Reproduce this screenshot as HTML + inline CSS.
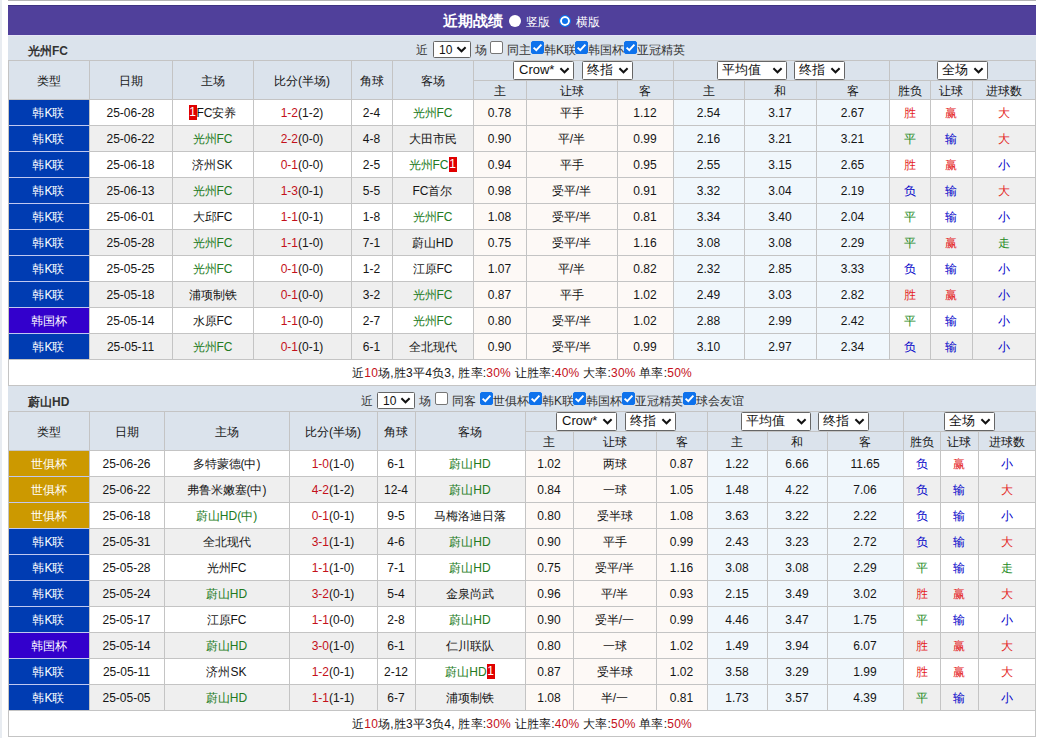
<!DOCTYPE html><html><head><meta charset="utf-8"><style>
html,body{margin:0;padding:0;background:#fff;width:1041px;height:738px;overflow:hidden;position:relative;font-family:"Liberation Sans", sans-serif;font-size:12px;color:#151515}
.t{position:absolute;text-align:center;white-space:nowrap;}
.bd{display:inline-block;vertical-align:top;margin-top:5px;width:8px;height:15px;line-height:15px;text-align:center;background:#e00000;color:#fff;font-size:12px}
.lb{position:absolute;font-size:12px;line-height:16px;color:#333;white-space:nowrap}
.sel{position:absolute;height:18px;box-sizing:border-box;border:1px solid #666;border-radius:1.5px;background:#fff;font-size:14px;line-height:16px;color:#111;}
.sl{position:absolute;left:5px;top:-1px}
.chev{position:absolute;right:3px;top:calc(50% - 4px)}
.cb{position:absolute;width:13px;height:13px;box-sizing:border-box;border:1px solid #767676;border-radius:2px;background:#fff}
.cb.on{background:#0e72ec;border-color:#0e72ec}
.cb svg{position:absolute;left:-1px;top:-1px}
.rd{position:absolute;width:12px;height:12px;border-radius:50%;background:#fff;box-sizing:border-box}
.rd.on{background:#0e72ec;border:1px solid #0e72ec;box-shadow:inset 0 0 0 2px #fff}
</style></head><body><div style="position:absolute;left:0;top:0;width:2px;height:738px;background:#e8ecf1"></div>
<div style="position:absolute;left:8px;top:0px;width:1028px;height:1px;background:#b4b4b4;"></div>
<div style="position:absolute;left:8px;top:5px;width:1028px;height:30px;background:#50409b;border-top:1px solid #3e3380;box-sizing:border-box"></div>
<div style="position:absolute;left:8px;top:35px;width:1028px;height:1px;background:#e6e4f6;"></div>
<div class="t" style="left:443px;top:12px;line-height:17px;color:#fff;font-size:15px;font-weight:bold">近期战绩</div>
<div class="rd" style="left:509px;top:15px"></div>
<div class="t" style="left:526px;top:14px;line-height:17px;color:#fff;font-size:12px">竖版</div>
<div class="rd on" style="left:559px;top:15px"></div>
<div class="t" style="left:576px;top:14px;line-height:17px;color:#fff;font-size:12px">横版</div>
<div style="position:absolute;left:8px;top:36px;width:1028px;height:24px;background:#dbe3ec;"></div>
<div class="t" style="left:28px;top:36px;height:24px;line-height:31px;font-weight:bold;color:#333;text-align:left">光州FC</div>
<div class="lb" style="left:416px;top:42px">近</div><div class="sel" style="left:433px;top:41px;width:38px;height:17px;font-size:12px;line-height:15px"><span class="sl" style="left:5px;top:1px">10</span><svg class="chev" width="11" height="7" viewBox="0 0 11 7"><path d="M1.4 1.3 L5.5 5.3 L9.6 1.3" fill="none" stroke="#111" stroke-width="2"/></svg></div><div class="lb" style="left:475px;top:42px">场</div><div class="cb" style="left:490px;top:41px"></div><div class="lb" style="left:507px;top:42px">同主</div><div class="cb on" style="left:531px;top:41px"><svg width="13" height="13" viewBox="0 0 13 13"><path d="M2.6 6.6 L5.3 9.2 L10.4 3.6" fill="none" stroke="#fff" stroke-width="1.9"/></svg></div><div class="lb" style="left:544px;top:42px">韩K联</div><div class="cb on" style="left:575px;top:41px"><svg width="13" height="13" viewBox="0 0 13 13"><path d="M2.6 6.6 L5.3 9.2 L10.4 3.6" fill="none" stroke="#fff" stroke-width="1.9"/></svg></div><div class="lb" style="left:588px;top:42px">韩国杯</div><div class="cb on" style="left:624px;top:41px"><svg width="13" height="13" viewBox="0 0 13 13"><path d="M2.6 6.6 L5.3 9.2 L10.4 3.6" fill="none" stroke="#fff" stroke-width="1.9"/></svg></div><div class="lb" style="left:637px;top:42px">亚冠精英</div>
<div style="position:absolute;left:8px;top:60px;width:1028px;height:40px;background:#dbe3ec;"></div>
<div style="position:absolute;left:8px;top:99px;width:1028px;height:26px;background:#ffffff;"></div>
<div style="position:absolute;left:473px;top:99px;width:200px;height:26px;background:#fdf9f6;"></div>
<div style="position:absolute;left:673px;top:99px;width:216px;height:26px;background:#f0f7fc;"></div>
<div style="position:absolute;left:8px;top:99px;width:81px;height:26px;background:#003cb2;"></div>
<div class="t" style="left:8px;top:100px;width:81px;height:26px;line-height:26px;color:#ffffff;">韩K联</div>
<div class="t" style="left:89px;top:100px;width:83px;height:26px;line-height:26px;color:#151515;">25-06-28</div>
<div class="t" style="left:172px;top:100px;width:81px;height:26px;line-height:26px;color:#151515;"><span class="bd">1</span><span style="color:#151515">FC安养</span></div>
<div class="t" style="left:253px;top:100px;width:98px;height:26px;line-height:26px;color:#151515;"><span style="color:#c4101a">1-2</span>(1-2)</div>
<div class="t" style="left:351px;top:100px;width:41px;height:26px;line-height:26px;color:#151515;">2-4</div>
<div class="t" style="left:392px;top:100px;width:81px;height:26px;line-height:26px;color:#151515;"><span style="color:#217a21">光州FC</span></div>
<div class="t" style="left:473px;top:100px;width:53px;height:26px;line-height:26px;color:#151515;">0.78</div>
<div class="t" style="left:526px;top:100px;width:91px;height:26px;line-height:26px;color:#151515;">平手</div>
<div class="t" style="left:617px;top:100px;width:56px;height:26px;line-height:26px;color:#151515;">1.12</div>
<div class="t" style="left:673px;top:100px;width:71px;height:26px;line-height:26px;color:#151515;">2.54</div>
<div class="t" style="left:744px;top:100px;width:72px;height:26px;line-height:26px;color:#151515;">3.17</div>
<div class="t" style="left:816px;top:100px;width:73px;height:26px;line-height:26px;color:#151515;">2.67</div>
<div class="t" style="left:889px;top:100px;width:41px;height:26px;line-height:26px;color:#e41c1c;">胜</div>
<div class="t" style="left:930px;top:100px;width:42px;height:26px;line-height:26px;color:#e41c1c;">赢</div>
<div class="t" style="left:972px;top:100px;width:63px;height:26px;line-height:26px;color:#e41c1c;">大</div>
<div style="position:absolute;left:8px;top:125px;width:1028px;height:26px;background:#efefef;"></div>
<div style="position:absolute;left:473px;top:125px;width:200px;height:26px;background:#fdf9f6;"></div>
<div style="position:absolute;left:673px;top:125px;width:216px;height:26px;background:#f0f7fc;"></div>
<div style="position:absolute;left:8px;top:125px;width:81px;height:26px;background:#003cb2;"></div>
<div class="t" style="left:8px;top:126px;width:81px;height:26px;line-height:26px;color:#ffffff;">韩K联</div>
<div class="t" style="left:89px;top:126px;width:83px;height:26px;line-height:26px;color:#151515;">25-06-22</div>
<div class="t" style="left:172px;top:126px;width:81px;height:26px;line-height:26px;color:#151515;"><span style="color:#217a21">光州FC</span></div>
<div class="t" style="left:253px;top:126px;width:98px;height:26px;line-height:26px;color:#151515;"><span style="color:#c4101a">2-2</span>(0-0)</div>
<div class="t" style="left:351px;top:126px;width:41px;height:26px;line-height:26px;color:#151515;">4-8</div>
<div class="t" style="left:392px;top:126px;width:81px;height:26px;line-height:26px;color:#151515;"><span style="color:#151515">大田市民</span></div>
<div class="t" style="left:473px;top:126px;width:53px;height:26px;line-height:26px;color:#151515;">0.90</div>
<div class="t" style="left:526px;top:126px;width:91px;height:26px;line-height:26px;color:#151515;">平/半</div>
<div class="t" style="left:617px;top:126px;width:56px;height:26px;line-height:26px;color:#151515;">0.99</div>
<div class="t" style="left:673px;top:126px;width:71px;height:26px;line-height:26px;color:#151515;">2.16</div>
<div class="t" style="left:744px;top:126px;width:72px;height:26px;line-height:26px;color:#151515;">3.21</div>
<div class="t" style="left:816px;top:126px;width:73px;height:26px;line-height:26px;color:#151515;">3.21</div>
<div class="t" style="left:889px;top:126px;width:41px;height:26px;line-height:26px;color:#1c8a1c;">平</div>
<div class="t" style="left:930px;top:126px;width:42px;height:26px;line-height:26px;color:#0000c8;">输</div>
<div class="t" style="left:972px;top:126px;width:63px;height:26px;line-height:26px;color:#e41c1c;">大</div>
<div style="position:absolute;left:8px;top:151px;width:1028px;height:26px;background:#ffffff;"></div>
<div style="position:absolute;left:473px;top:151px;width:200px;height:26px;background:#fdf9f6;"></div>
<div style="position:absolute;left:673px;top:151px;width:216px;height:26px;background:#f0f7fc;"></div>
<div style="position:absolute;left:8px;top:151px;width:81px;height:26px;background:#003cb2;"></div>
<div class="t" style="left:8px;top:152px;width:81px;height:26px;line-height:26px;color:#ffffff;">韩K联</div>
<div class="t" style="left:89px;top:152px;width:83px;height:26px;line-height:26px;color:#151515;">25-06-18</div>
<div class="t" style="left:172px;top:152px;width:81px;height:26px;line-height:26px;color:#151515;"><span style="color:#151515">济州SK</span></div>
<div class="t" style="left:253px;top:152px;width:98px;height:26px;line-height:26px;color:#151515;"><span style="color:#c4101a">0-1</span>(0-0)</div>
<div class="t" style="left:351px;top:152px;width:41px;height:26px;line-height:26px;color:#151515;">2-5</div>
<div class="t" style="left:392px;top:152px;width:81px;height:26px;line-height:26px;color:#151515;"><span style="color:#217a21">光州FC</span><span class="bd">1</span></div>
<div class="t" style="left:473px;top:152px;width:53px;height:26px;line-height:26px;color:#151515;">0.94</div>
<div class="t" style="left:526px;top:152px;width:91px;height:26px;line-height:26px;color:#151515;">平手</div>
<div class="t" style="left:617px;top:152px;width:56px;height:26px;line-height:26px;color:#151515;">0.95</div>
<div class="t" style="left:673px;top:152px;width:71px;height:26px;line-height:26px;color:#151515;">2.55</div>
<div class="t" style="left:744px;top:152px;width:72px;height:26px;line-height:26px;color:#151515;">3.15</div>
<div class="t" style="left:816px;top:152px;width:73px;height:26px;line-height:26px;color:#151515;">2.65</div>
<div class="t" style="left:889px;top:152px;width:41px;height:26px;line-height:26px;color:#e41c1c;">胜</div>
<div class="t" style="left:930px;top:152px;width:42px;height:26px;line-height:26px;color:#e41c1c;">赢</div>
<div class="t" style="left:972px;top:152px;width:63px;height:26px;line-height:26px;color:#0000c8;">小</div>
<div style="position:absolute;left:8px;top:177px;width:1028px;height:26px;background:#efefef;"></div>
<div style="position:absolute;left:473px;top:177px;width:200px;height:26px;background:#fdf9f6;"></div>
<div style="position:absolute;left:673px;top:177px;width:216px;height:26px;background:#f0f7fc;"></div>
<div style="position:absolute;left:8px;top:177px;width:81px;height:26px;background:#003cb2;"></div>
<div class="t" style="left:8px;top:178px;width:81px;height:26px;line-height:26px;color:#ffffff;">韩K联</div>
<div class="t" style="left:89px;top:178px;width:83px;height:26px;line-height:26px;color:#151515;">25-06-13</div>
<div class="t" style="left:172px;top:178px;width:81px;height:26px;line-height:26px;color:#151515;"><span style="color:#217a21">光州FC</span></div>
<div class="t" style="left:253px;top:178px;width:98px;height:26px;line-height:26px;color:#151515;"><span style="color:#c4101a">1-3</span>(0-1)</div>
<div class="t" style="left:351px;top:178px;width:41px;height:26px;line-height:26px;color:#151515;">5-5</div>
<div class="t" style="left:392px;top:178px;width:81px;height:26px;line-height:26px;color:#151515;"><span style="color:#151515">FC首尔</span></div>
<div class="t" style="left:473px;top:178px;width:53px;height:26px;line-height:26px;color:#151515;">0.98</div>
<div class="t" style="left:526px;top:178px;width:91px;height:26px;line-height:26px;color:#151515;">受平/半</div>
<div class="t" style="left:617px;top:178px;width:56px;height:26px;line-height:26px;color:#151515;">0.91</div>
<div class="t" style="left:673px;top:178px;width:71px;height:26px;line-height:26px;color:#151515;">3.32</div>
<div class="t" style="left:744px;top:178px;width:72px;height:26px;line-height:26px;color:#151515;">3.04</div>
<div class="t" style="left:816px;top:178px;width:73px;height:26px;line-height:26px;color:#151515;">2.19</div>
<div class="t" style="left:889px;top:178px;width:41px;height:26px;line-height:26px;color:#0000c8;">负</div>
<div class="t" style="left:930px;top:178px;width:42px;height:26px;line-height:26px;color:#0000c8;">输</div>
<div class="t" style="left:972px;top:178px;width:63px;height:26px;line-height:26px;color:#e41c1c;">大</div>
<div style="position:absolute;left:8px;top:203px;width:1028px;height:26px;background:#ffffff;"></div>
<div style="position:absolute;left:473px;top:203px;width:200px;height:26px;background:#fdf9f6;"></div>
<div style="position:absolute;left:673px;top:203px;width:216px;height:26px;background:#f0f7fc;"></div>
<div style="position:absolute;left:8px;top:203px;width:81px;height:26px;background:#003cb2;"></div>
<div class="t" style="left:8px;top:204px;width:81px;height:26px;line-height:26px;color:#ffffff;">韩K联</div>
<div class="t" style="left:89px;top:204px;width:83px;height:26px;line-height:26px;color:#151515;">25-06-01</div>
<div class="t" style="left:172px;top:204px;width:81px;height:26px;line-height:26px;color:#151515;"><span style="color:#151515">大邱FC</span></div>
<div class="t" style="left:253px;top:204px;width:98px;height:26px;line-height:26px;color:#151515;"><span style="color:#c4101a">1-1</span>(0-1)</div>
<div class="t" style="left:351px;top:204px;width:41px;height:26px;line-height:26px;color:#151515;">1-8</div>
<div class="t" style="left:392px;top:204px;width:81px;height:26px;line-height:26px;color:#151515;"><span style="color:#217a21">光州FC</span></div>
<div class="t" style="left:473px;top:204px;width:53px;height:26px;line-height:26px;color:#151515;">1.08</div>
<div class="t" style="left:526px;top:204px;width:91px;height:26px;line-height:26px;color:#151515;">受平/半</div>
<div class="t" style="left:617px;top:204px;width:56px;height:26px;line-height:26px;color:#151515;">0.81</div>
<div class="t" style="left:673px;top:204px;width:71px;height:26px;line-height:26px;color:#151515;">3.34</div>
<div class="t" style="left:744px;top:204px;width:72px;height:26px;line-height:26px;color:#151515;">3.40</div>
<div class="t" style="left:816px;top:204px;width:73px;height:26px;line-height:26px;color:#151515;">2.04</div>
<div class="t" style="left:889px;top:204px;width:41px;height:26px;line-height:26px;color:#1c8a1c;">平</div>
<div class="t" style="left:930px;top:204px;width:42px;height:26px;line-height:26px;color:#0000c8;">输</div>
<div class="t" style="left:972px;top:204px;width:63px;height:26px;line-height:26px;color:#0000c8;">小</div>
<div style="position:absolute;left:8px;top:229px;width:1028px;height:26px;background:#efefef;"></div>
<div style="position:absolute;left:473px;top:229px;width:200px;height:26px;background:#fdf9f6;"></div>
<div style="position:absolute;left:673px;top:229px;width:216px;height:26px;background:#f0f7fc;"></div>
<div style="position:absolute;left:8px;top:229px;width:81px;height:26px;background:#003cb2;"></div>
<div class="t" style="left:8px;top:230px;width:81px;height:26px;line-height:26px;color:#ffffff;">韩K联</div>
<div class="t" style="left:89px;top:230px;width:83px;height:26px;line-height:26px;color:#151515;">25-05-28</div>
<div class="t" style="left:172px;top:230px;width:81px;height:26px;line-height:26px;color:#151515;"><span style="color:#217a21">光州FC</span></div>
<div class="t" style="left:253px;top:230px;width:98px;height:26px;line-height:26px;color:#151515;"><span style="color:#c4101a">1-1</span>(1-0)</div>
<div class="t" style="left:351px;top:230px;width:41px;height:26px;line-height:26px;color:#151515;">7-1</div>
<div class="t" style="left:392px;top:230px;width:81px;height:26px;line-height:26px;color:#151515;"><span style="color:#151515">蔚山HD</span></div>
<div class="t" style="left:473px;top:230px;width:53px;height:26px;line-height:26px;color:#151515;">0.75</div>
<div class="t" style="left:526px;top:230px;width:91px;height:26px;line-height:26px;color:#151515;">受平/半</div>
<div class="t" style="left:617px;top:230px;width:56px;height:26px;line-height:26px;color:#151515;">1.16</div>
<div class="t" style="left:673px;top:230px;width:71px;height:26px;line-height:26px;color:#151515;">3.08</div>
<div class="t" style="left:744px;top:230px;width:72px;height:26px;line-height:26px;color:#151515;">3.08</div>
<div class="t" style="left:816px;top:230px;width:73px;height:26px;line-height:26px;color:#151515;">2.29</div>
<div class="t" style="left:889px;top:230px;width:41px;height:26px;line-height:26px;color:#1c8a1c;">平</div>
<div class="t" style="left:930px;top:230px;width:42px;height:26px;line-height:26px;color:#e41c1c;">赢</div>
<div class="t" style="left:972px;top:230px;width:63px;height:26px;line-height:26px;color:#1c8a1c;">走</div>
<div style="position:absolute;left:8px;top:255px;width:1028px;height:26px;background:#ffffff;"></div>
<div style="position:absolute;left:473px;top:255px;width:200px;height:26px;background:#fdf9f6;"></div>
<div style="position:absolute;left:673px;top:255px;width:216px;height:26px;background:#f0f7fc;"></div>
<div style="position:absolute;left:8px;top:255px;width:81px;height:26px;background:#003cb2;"></div>
<div class="t" style="left:8px;top:256px;width:81px;height:26px;line-height:26px;color:#ffffff;">韩K联</div>
<div class="t" style="left:89px;top:256px;width:83px;height:26px;line-height:26px;color:#151515;">25-05-25</div>
<div class="t" style="left:172px;top:256px;width:81px;height:26px;line-height:26px;color:#151515;"><span style="color:#217a21">光州FC</span></div>
<div class="t" style="left:253px;top:256px;width:98px;height:26px;line-height:26px;color:#151515;"><span style="color:#c4101a">0-1</span>(0-0)</div>
<div class="t" style="left:351px;top:256px;width:41px;height:26px;line-height:26px;color:#151515;">1-2</div>
<div class="t" style="left:392px;top:256px;width:81px;height:26px;line-height:26px;color:#151515;"><span style="color:#151515">江原FC</span></div>
<div class="t" style="left:473px;top:256px;width:53px;height:26px;line-height:26px;color:#151515;">1.07</div>
<div class="t" style="left:526px;top:256px;width:91px;height:26px;line-height:26px;color:#151515;">平/半</div>
<div class="t" style="left:617px;top:256px;width:56px;height:26px;line-height:26px;color:#151515;">0.82</div>
<div class="t" style="left:673px;top:256px;width:71px;height:26px;line-height:26px;color:#151515;">2.32</div>
<div class="t" style="left:744px;top:256px;width:72px;height:26px;line-height:26px;color:#151515;">2.85</div>
<div class="t" style="left:816px;top:256px;width:73px;height:26px;line-height:26px;color:#151515;">3.33</div>
<div class="t" style="left:889px;top:256px;width:41px;height:26px;line-height:26px;color:#0000c8;">负</div>
<div class="t" style="left:930px;top:256px;width:42px;height:26px;line-height:26px;color:#0000c8;">输</div>
<div class="t" style="left:972px;top:256px;width:63px;height:26px;line-height:26px;color:#0000c8;">小</div>
<div style="position:absolute;left:8px;top:281px;width:1028px;height:26px;background:#efefef;"></div>
<div style="position:absolute;left:473px;top:281px;width:200px;height:26px;background:#fdf9f6;"></div>
<div style="position:absolute;left:673px;top:281px;width:216px;height:26px;background:#f0f7fc;"></div>
<div style="position:absolute;left:8px;top:281px;width:81px;height:26px;background:#003cb2;"></div>
<div class="t" style="left:8px;top:282px;width:81px;height:26px;line-height:26px;color:#ffffff;">韩K联</div>
<div class="t" style="left:89px;top:282px;width:83px;height:26px;line-height:26px;color:#151515;">25-05-18</div>
<div class="t" style="left:172px;top:282px;width:81px;height:26px;line-height:26px;color:#151515;"><span style="color:#151515">浦项制铁</span></div>
<div class="t" style="left:253px;top:282px;width:98px;height:26px;line-height:26px;color:#151515;"><span style="color:#c4101a">0-1</span>(0-0)</div>
<div class="t" style="left:351px;top:282px;width:41px;height:26px;line-height:26px;color:#151515;">3-2</div>
<div class="t" style="left:392px;top:282px;width:81px;height:26px;line-height:26px;color:#151515;"><span style="color:#217a21">光州FC</span></div>
<div class="t" style="left:473px;top:282px;width:53px;height:26px;line-height:26px;color:#151515;">0.87</div>
<div class="t" style="left:526px;top:282px;width:91px;height:26px;line-height:26px;color:#151515;">平手</div>
<div class="t" style="left:617px;top:282px;width:56px;height:26px;line-height:26px;color:#151515;">1.02</div>
<div class="t" style="left:673px;top:282px;width:71px;height:26px;line-height:26px;color:#151515;">2.49</div>
<div class="t" style="left:744px;top:282px;width:72px;height:26px;line-height:26px;color:#151515;">3.03</div>
<div class="t" style="left:816px;top:282px;width:73px;height:26px;line-height:26px;color:#151515;">2.82</div>
<div class="t" style="left:889px;top:282px;width:41px;height:26px;line-height:26px;color:#e41c1c;">胜</div>
<div class="t" style="left:930px;top:282px;width:42px;height:26px;line-height:26px;color:#e41c1c;">赢</div>
<div class="t" style="left:972px;top:282px;width:63px;height:26px;line-height:26px;color:#0000c8;">小</div>
<div style="position:absolute;left:8px;top:307px;width:1028px;height:26px;background:#ffffff;"></div>
<div style="position:absolute;left:473px;top:307px;width:200px;height:26px;background:#fdf9f6;"></div>
<div style="position:absolute;left:673px;top:307px;width:216px;height:26px;background:#f0f7fc;"></div>
<div style="position:absolute;left:8px;top:307px;width:81px;height:26px;background:#3300cc;"></div>
<div class="t" style="left:8px;top:308px;width:81px;height:26px;line-height:26px;color:#ffffff;">韩国杯</div>
<div class="t" style="left:89px;top:308px;width:83px;height:26px;line-height:26px;color:#151515;">25-05-14</div>
<div class="t" style="left:172px;top:308px;width:81px;height:26px;line-height:26px;color:#151515;"><span style="color:#151515">水原FC</span></div>
<div class="t" style="left:253px;top:308px;width:98px;height:26px;line-height:26px;color:#151515;"><span style="color:#c4101a">1-1</span>(0-0)</div>
<div class="t" style="left:351px;top:308px;width:41px;height:26px;line-height:26px;color:#151515;">2-7</div>
<div class="t" style="left:392px;top:308px;width:81px;height:26px;line-height:26px;color:#151515;"><span style="color:#217a21">光州FC</span></div>
<div class="t" style="left:473px;top:308px;width:53px;height:26px;line-height:26px;color:#151515;">0.80</div>
<div class="t" style="left:526px;top:308px;width:91px;height:26px;line-height:26px;color:#151515;">受平/半</div>
<div class="t" style="left:617px;top:308px;width:56px;height:26px;line-height:26px;color:#151515;">1.02</div>
<div class="t" style="left:673px;top:308px;width:71px;height:26px;line-height:26px;color:#151515;">2.88</div>
<div class="t" style="left:744px;top:308px;width:72px;height:26px;line-height:26px;color:#151515;">2.99</div>
<div class="t" style="left:816px;top:308px;width:73px;height:26px;line-height:26px;color:#151515;">2.42</div>
<div class="t" style="left:889px;top:308px;width:41px;height:26px;line-height:26px;color:#1c8a1c;">平</div>
<div class="t" style="left:930px;top:308px;width:42px;height:26px;line-height:26px;color:#0000c8;">输</div>
<div class="t" style="left:972px;top:308px;width:63px;height:26px;line-height:26px;color:#0000c8;">小</div>
<div style="position:absolute;left:8px;top:333px;width:1028px;height:26px;background:#efefef;"></div>
<div style="position:absolute;left:473px;top:333px;width:200px;height:26px;background:#fdf9f6;"></div>
<div style="position:absolute;left:673px;top:333px;width:216px;height:26px;background:#f0f7fc;"></div>
<div style="position:absolute;left:8px;top:333px;width:81px;height:26px;background:#003cb2;"></div>
<div class="t" style="left:8px;top:334px;width:81px;height:26px;line-height:26px;color:#ffffff;">韩K联</div>
<div class="t" style="left:89px;top:334px;width:83px;height:26px;line-height:26px;color:#151515;">25-05-11</div>
<div class="t" style="left:172px;top:334px;width:81px;height:26px;line-height:26px;color:#151515;"><span style="color:#217a21">光州FC</span></div>
<div class="t" style="left:253px;top:334px;width:98px;height:26px;line-height:26px;color:#151515;"><span style="color:#c4101a">0-1</span>(0-1)</div>
<div class="t" style="left:351px;top:334px;width:41px;height:26px;line-height:26px;color:#151515;">6-1</div>
<div class="t" style="left:392px;top:334px;width:81px;height:26px;line-height:26px;color:#151515;"><span style="color:#151515">全北现代</span></div>
<div class="t" style="left:473px;top:334px;width:53px;height:26px;line-height:26px;color:#151515;">0.90</div>
<div class="t" style="left:526px;top:334px;width:91px;height:26px;line-height:26px;color:#151515;">受平/半</div>
<div class="t" style="left:617px;top:334px;width:56px;height:26px;line-height:26px;color:#151515;">0.99</div>
<div class="t" style="left:673px;top:334px;width:71px;height:26px;line-height:26px;color:#151515;">3.10</div>
<div class="t" style="left:744px;top:334px;width:72px;height:26px;line-height:26px;color:#151515;">2.97</div>
<div class="t" style="left:816px;top:334px;width:73px;height:26px;line-height:26px;color:#151515;">2.34</div>
<div class="t" style="left:889px;top:334px;width:41px;height:26px;line-height:26px;color:#0000c8;">负</div>
<div class="t" style="left:930px;top:334px;width:42px;height:26px;line-height:26px;color:#0000c8;">输</div>
<div class="t" style="left:972px;top:334px;width:63px;height:26px;line-height:26px;color:#0000c8;">小</div>
<div style="position:absolute;left:8px;top:359px;width:1028px;height:26px;background:#ffffff;"></div>
<div class="t" style="left:8px;top:360px;width:1028px;height:26px;line-height:26px;color:#151515;letter-spacing:0.22px">近<span style="color:#c4101a">10</span>场,胜3平4负3, 胜率:<span style="color:#c4101a">30%</span> 让胜率:<span style="color:#c4101a">40%</span> 大率:<span style="color:#c4101a">30%</span> 单率:<span style="color:#c4101a">50%</span></div>
<div style="position:absolute;left:8px;top:60px;width:1028px;height:1px;background:#c4c4c4;"></div>
<div style="position:absolute;left:473px;top:80px;width:563px;height:1px;background:#c4c4c4;"></div>
<div style="position:absolute;left:8px;top:99px;width:1028px;height:1px;background:#c4c4c4;"></div>
<div style="position:absolute;left:8px;top:125px;width:1028px;height:1px;background:#c4c4c4;"></div>
<div style="position:absolute;left:9px;top:125px;width:80px;height:1px;background:#c0c8f0;"></div>
<div style="position:absolute;left:8px;top:151px;width:1028px;height:1px;background:#c4c4c4;"></div>
<div style="position:absolute;left:9px;top:151px;width:80px;height:1px;background:#c0c8f0;"></div>
<div style="position:absolute;left:8px;top:177px;width:1028px;height:1px;background:#c4c4c4;"></div>
<div style="position:absolute;left:9px;top:177px;width:80px;height:1px;background:#c0c8f0;"></div>
<div style="position:absolute;left:8px;top:203px;width:1028px;height:1px;background:#c4c4c4;"></div>
<div style="position:absolute;left:9px;top:203px;width:80px;height:1px;background:#c0c8f0;"></div>
<div style="position:absolute;left:8px;top:229px;width:1028px;height:1px;background:#c4c4c4;"></div>
<div style="position:absolute;left:9px;top:229px;width:80px;height:1px;background:#c0c8f0;"></div>
<div style="position:absolute;left:8px;top:255px;width:1028px;height:1px;background:#c4c4c4;"></div>
<div style="position:absolute;left:9px;top:255px;width:80px;height:1px;background:#c0c8f0;"></div>
<div style="position:absolute;left:8px;top:281px;width:1028px;height:1px;background:#c4c4c4;"></div>
<div style="position:absolute;left:9px;top:281px;width:80px;height:1px;background:#c0c8f0;"></div>
<div style="position:absolute;left:8px;top:307px;width:1028px;height:1px;background:#c4c4c4;"></div>
<div style="position:absolute;left:9px;top:307px;width:80px;height:1px;background:#c0c8f0;"></div>
<div style="position:absolute;left:8px;top:333px;width:1028px;height:1px;background:#c4c4c4;"></div>
<div style="position:absolute;left:9px;top:333px;width:80px;height:1px;background:#c0c8f0;"></div>
<div style="position:absolute;left:8px;top:359px;width:1028px;height:1px;background:#c4c4c4;"></div>
<div style="position:absolute;left:8px;top:385px;width:1028px;height:1px;background:#c4c4c4;"></div>
<div style="position:absolute;left:8px;top:60px;width:1px;height:326px;background:#c4c4c4;"></div>
<div style="position:absolute;left:89px;top:60px;width:1px;height:299px;background:#c4c4c4;"></div>
<div style="position:absolute;left:172px;top:60px;width:1px;height:299px;background:#c4c4c4;"></div>
<div style="position:absolute;left:253px;top:60px;width:1px;height:299px;background:#c4c4c4;"></div>
<div style="position:absolute;left:351px;top:60px;width:1px;height:299px;background:#c4c4c4;"></div>
<div style="position:absolute;left:392px;top:60px;width:1px;height:299px;background:#c4c4c4;"></div>
<div style="position:absolute;left:473px;top:60px;width:1px;height:299px;background:#c4c4c4;"></div>
<div style="position:absolute;left:526px;top:80px;width:1px;height:279px;background:#c4c4c4;"></div>
<div style="position:absolute;left:617px;top:80px;width:1px;height:279px;background:#c4c4c4;"></div>
<div style="position:absolute;left:673px;top:60px;width:1px;height:299px;background:#c4c4c4;"></div>
<div style="position:absolute;left:744px;top:80px;width:1px;height:279px;background:#c4c4c4;"></div>
<div style="position:absolute;left:816px;top:80px;width:1px;height:279px;background:#c4c4c4;"></div>
<div style="position:absolute;left:889px;top:60px;width:1px;height:299px;background:#c4c4c4;"></div>
<div style="position:absolute;left:930px;top:80px;width:1px;height:279px;background:#c4c4c4;"></div>
<div style="position:absolute;left:972px;top:80px;width:1px;height:279px;background:#c4c4c4;"></div>
<div style="position:absolute;left:1035px;top:60px;width:1px;height:326px;background:#c4c4c4;"></div>
<div class="t" style="left:8px;top:62px;width:81px;height:38px;line-height:38px;color:#151515;">类型</div>
<div class="t" style="left:89px;top:62px;width:83px;height:38px;line-height:38px;color:#151515;">日期</div>
<div class="t" style="left:172px;top:62px;width:81px;height:38px;line-height:38px;color:#151515;">主场</div>
<div class="t" style="left:253px;top:62px;width:98px;height:38px;line-height:38px;color:#151515;">比分(半场)</div>
<div class="t" style="left:351px;top:62px;width:41px;height:38px;line-height:38px;color:#151515;">角球</div>
<div class="t" style="left:392px;top:62px;width:81px;height:38px;line-height:38px;color:#151515;">客场</div>
<div class="t" style="left:473px;top:82px;width:53px;height:18px;line-height:18px;color:#151515;">主</div>
<div class="t" style="left:526px;top:82px;width:91px;height:18px;line-height:18px;color:#151515;">让球</div>
<div class="t" style="left:617px;top:82px;width:56px;height:18px;line-height:18px;color:#151515;">客</div>
<div class="t" style="left:673px;top:82px;width:71px;height:18px;line-height:18px;color:#151515;">主</div>
<div class="t" style="left:744px;top:82px;width:72px;height:18px;line-height:18px;color:#151515;">和</div>
<div class="t" style="left:816px;top:82px;width:73px;height:18px;line-height:18px;color:#151515;">客</div>
<div class="t" style="left:889px;top:82px;width:41px;height:18px;line-height:18px;color:#151515;">胜负</div>
<div class="t" style="left:930px;top:82px;width:42px;height:18px;line-height:18px;color:#151515;">让球</div>
<div class="t" style="left:972px;top:82px;width:63px;height:18px;line-height:18px;color:#151515;">进球数</div>
<div class="sel" style="left:513px;top:61px;width:61px;height:19px;font-size:13px;line-height:17px"><span class="sl" style="left:5px;top:-1px">Crow*</span><svg class="chev" width="11" height="7" viewBox="0 0 11 7"><path d="M1.4 1.3 L5.5 5.3 L9.6 1.3" fill="none" stroke="#111" stroke-width="2"/></svg></div>
<div class="sel" style="left:582px;top:61px;width:51px;height:19px;font-size:13px;line-height:17px"><span class="sl" style="left:4px;top:-1px">终指</span><svg class="chev" width="11" height="7" viewBox="0 0 11 7"><path d="M1.4 1.3 L5.5 5.3 L9.6 1.3" fill="none" stroke="#111" stroke-width="2"/></svg></div>
<div class="sel" style="left:717px;top:61px;width:70px;height:19px;font-size:13px;line-height:17px"><span class="sl" style="left:4px;top:-1px">平均值</span><svg class="chev" width="11" height="7" viewBox="0 0 11 7"><path d="M1.4 1.3 L5.5 5.3 L9.6 1.3" fill="none" stroke="#111" stroke-width="2"/></svg></div>
<div class="sel" style="left:794px;top:61px;width:51px;height:19px;font-size:13px;line-height:17px"><span class="sl" style="left:4px;top:-1px">终指</span><svg class="chev" width="11" height="7" viewBox="0 0 11 7"><path d="M1.4 1.3 L5.5 5.3 L9.6 1.3" fill="none" stroke="#111" stroke-width="2"/></svg></div>
<div class="sel" style="left:937px;top:61px;width:51px;height:19px;font-size:13px;line-height:17px"><span class="sl" style="left:4px;top:-1px">全场</span><svg class="chev" width="11" height="7" viewBox="0 0 11 7"><path d="M1.4 1.3 L5.5 5.3 L9.6 1.3" fill="none" stroke="#111" stroke-width="2"/></svg></div>
<div style="position:absolute;left:8px;top:386px;width:1028px;height:25px;background:#dbe3ec;"></div>
<div class="t" style="left:28px;top:386px;height:25px;line-height:32px;font-weight:bold;color:#333;text-align:left">蔚山HD</div>
<div class="lb" style="left:361px;top:393px">近</div><div class="sel" style="left:377px;top:392px;width:38px;height:17px;font-size:12px;line-height:15px"><span class="sl" style="left:5px;top:1px">10</span><svg class="chev" width="11" height="7" viewBox="0 0 11 7"><path d="M1.4 1.3 L5.5 5.3 L9.6 1.3" fill="none" stroke="#111" stroke-width="2"/></svg></div><div class="lb" style="left:419px;top:393px">场</div><div class="cb" style="left:435px;top:392px"></div><div class="lb" style="left:452px;top:393px">同客</div><div class="cb on" style="left:480px;top:392px"><svg width="13" height="13" viewBox="0 0 13 13"><path d="M2.6 6.6 L5.3 9.2 L10.4 3.6" fill="none" stroke="#fff" stroke-width="1.9"/></svg></div><div class="lb" style="left:493px;top:393px">世俱杯</div><div class="cb on" style="left:529px;top:392px"><svg width="13" height="13" viewBox="0 0 13 13"><path d="M2.6 6.6 L5.3 9.2 L10.4 3.6" fill="none" stroke="#fff" stroke-width="1.9"/></svg></div><div class="lb" style="left:542px;top:393px">韩K联</div><div class="cb on" style="left:573px;top:392px"><svg width="13" height="13" viewBox="0 0 13 13"><path d="M2.6 6.6 L5.3 9.2 L10.4 3.6" fill="none" stroke="#fff" stroke-width="1.9"/></svg></div><div class="lb" style="left:586px;top:393px">韩国杯</div><div class="cb on" style="left:622px;top:392px"><svg width="13" height="13" viewBox="0 0 13 13"><path d="M2.6 6.6 L5.3 9.2 L10.4 3.6" fill="none" stroke="#fff" stroke-width="1.9"/></svg></div><div class="lb" style="left:635px;top:393px">亚冠精英</div><div class="cb on" style="left:683px;top:392px"><svg width="13" height="13" viewBox="0 0 13 13"><path d="M2.6 6.6 L5.3 9.2 L10.4 3.6" fill="none" stroke="#fff" stroke-width="1.9"/></svg></div><div class="lb" style="left:696px;top:393px">球会友谊</div>
<div style="position:absolute;left:8px;top:411px;width:1028px;height:40px;background:#dbe3ec;"></div>
<div style="position:absolute;left:8px;top:450px;width:1028px;height:26px;background:#ffffff;"></div>
<div style="position:absolute;left:525px;top:450px;width:182px;height:26px;background:#fdf9f6;"></div>
<div style="position:absolute;left:707px;top:450px;width:196px;height:26px;background:#f0f7fc;"></div>
<div style="position:absolute;left:8px;top:450px;width:81px;height:26px;background:#cc9900;"></div>
<div class="t" style="left:8px;top:451px;width:81px;height:26px;line-height:26px;color:#ffffff;">世俱杯</div>
<div class="t" style="left:89px;top:451px;width:75px;height:26px;line-height:26px;color:#151515;">25-06-26</div>
<div class="t" style="left:164px;top:451px;width:125px;height:26px;line-height:26px;color:#151515;"><span style="color:#151515">多特蒙德(中)</span></div>
<div class="t" style="left:289px;top:451px;width:88px;height:26px;line-height:26px;color:#151515;"><span style="color:#c4101a">1-0</span>(1-0)</div>
<div class="t" style="left:377px;top:451px;width:38px;height:26px;line-height:26px;color:#151515;">6-1</div>
<div class="t" style="left:415px;top:451px;width:110px;height:26px;line-height:26px;color:#151515;"><span style="color:#217a21">蔚山HD</span></div>
<div class="t" style="left:525px;top:451px;width:48px;height:26px;line-height:26px;color:#151515;">1.02</div>
<div class="t" style="left:573px;top:451px;width:83px;height:26px;line-height:26px;color:#151515;">两球</div>
<div class="t" style="left:656px;top:451px;width:51px;height:26px;line-height:26px;color:#151515;">0.87</div>
<div class="t" style="left:707px;top:451px;width:60px;height:26px;line-height:26px;color:#151515;">1.22</div>
<div class="t" style="left:767px;top:451px;width:60px;height:26px;line-height:26px;color:#151515;">6.66</div>
<div class="t" style="left:827px;top:451px;width:76px;height:26px;line-height:26px;color:#151515;">11.65</div>
<div class="t" style="left:903px;top:451px;width:37px;height:26px;line-height:26px;color:#0000c8;">负</div>
<div class="t" style="left:940px;top:451px;width:38px;height:26px;line-height:26px;color:#e41c1c;">赢</div>
<div class="t" style="left:978px;top:451px;width:57px;height:26px;line-height:26px;color:#0000c8;">小</div>
<div style="position:absolute;left:8px;top:476px;width:1028px;height:26px;background:#efefef;"></div>
<div style="position:absolute;left:525px;top:476px;width:182px;height:26px;background:#fdf9f6;"></div>
<div style="position:absolute;left:707px;top:476px;width:196px;height:26px;background:#f0f7fc;"></div>
<div style="position:absolute;left:8px;top:476px;width:81px;height:26px;background:#cc9900;"></div>
<div class="t" style="left:8px;top:477px;width:81px;height:26px;line-height:26px;color:#ffffff;">世俱杯</div>
<div class="t" style="left:89px;top:477px;width:75px;height:26px;line-height:26px;color:#151515;">25-06-22</div>
<div class="t" style="left:164px;top:477px;width:125px;height:26px;line-height:26px;color:#151515;"><span style="color:#151515">弗鲁米嫩塞(中)</span></div>
<div class="t" style="left:289px;top:477px;width:88px;height:26px;line-height:26px;color:#151515;"><span style="color:#c4101a">4-2</span>(1-2)</div>
<div class="t" style="left:377px;top:477px;width:38px;height:26px;line-height:26px;color:#151515;">12-4</div>
<div class="t" style="left:415px;top:477px;width:110px;height:26px;line-height:26px;color:#151515;"><span style="color:#217a21">蔚山HD</span></div>
<div class="t" style="left:525px;top:477px;width:48px;height:26px;line-height:26px;color:#151515;">0.84</div>
<div class="t" style="left:573px;top:477px;width:83px;height:26px;line-height:26px;color:#151515;">一球</div>
<div class="t" style="left:656px;top:477px;width:51px;height:26px;line-height:26px;color:#151515;">1.05</div>
<div class="t" style="left:707px;top:477px;width:60px;height:26px;line-height:26px;color:#151515;">1.48</div>
<div class="t" style="left:767px;top:477px;width:60px;height:26px;line-height:26px;color:#151515;">4.22</div>
<div class="t" style="left:827px;top:477px;width:76px;height:26px;line-height:26px;color:#151515;">7.06</div>
<div class="t" style="left:903px;top:477px;width:37px;height:26px;line-height:26px;color:#0000c8;">负</div>
<div class="t" style="left:940px;top:477px;width:38px;height:26px;line-height:26px;color:#0000c8;">输</div>
<div class="t" style="left:978px;top:477px;width:57px;height:26px;line-height:26px;color:#e41c1c;">大</div>
<div style="position:absolute;left:8px;top:502px;width:1028px;height:26px;background:#ffffff;"></div>
<div style="position:absolute;left:525px;top:502px;width:182px;height:26px;background:#fdf9f6;"></div>
<div style="position:absolute;left:707px;top:502px;width:196px;height:26px;background:#f0f7fc;"></div>
<div style="position:absolute;left:8px;top:502px;width:81px;height:26px;background:#cc9900;"></div>
<div class="t" style="left:8px;top:503px;width:81px;height:26px;line-height:26px;color:#ffffff;">世俱杯</div>
<div class="t" style="left:89px;top:503px;width:75px;height:26px;line-height:26px;color:#151515;">25-06-18</div>
<div class="t" style="left:164px;top:503px;width:125px;height:26px;line-height:26px;color:#151515;"><span style="color:#217a21">蔚山HD(中)</span></div>
<div class="t" style="left:289px;top:503px;width:88px;height:26px;line-height:26px;color:#151515;"><span style="color:#c4101a">0-1</span>(0-1)</div>
<div class="t" style="left:377px;top:503px;width:38px;height:26px;line-height:26px;color:#151515;">9-5</div>
<div class="t" style="left:415px;top:503px;width:110px;height:26px;line-height:26px;color:#151515;"><span style="color:#151515">马梅洛迪日落</span></div>
<div class="t" style="left:525px;top:503px;width:48px;height:26px;line-height:26px;color:#151515;">0.80</div>
<div class="t" style="left:573px;top:503px;width:83px;height:26px;line-height:26px;color:#151515;">受半球</div>
<div class="t" style="left:656px;top:503px;width:51px;height:26px;line-height:26px;color:#151515;">1.08</div>
<div class="t" style="left:707px;top:503px;width:60px;height:26px;line-height:26px;color:#151515;">3.63</div>
<div class="t" style="left:767px;top:503px;width:60px;height:26px;line-height:26px;color:#151515;">3.22</div>
<div class="t" style="left:827px;top:503px;width:76px;height:26px;line-height:26px;color:#151515;">2.22</div>
<div class="t" style="left:903px;top:503px;width:37px;height:26px;line-height:26px;color:#0000c8;">负</div>
<div class="t" style="left:940px;top:503px;width:38px;height:26px;line-height:26px;color:#0000c8;">输</div>
<div class="t" style="left:978px;top:503px;width:57px;height:26px;line-height:26px;color:#0000c8;">小</div>
<div style="position:absolute;left:8px;top:528px;width:1028px;height:26px;background:#efefef;"></div>
<div style="position:absolute;left:525px;top:528px;width:182px;height:26px;background:#fdf9f6;"></div>
<div style="position:absolute;left:707px;top:528px;width:196px;height:26px;background:#f0f7fc;"></div>
<div style="position:absolute;left:8px;top:528px;width:81px;height:26px;background:#003cb2;"></div>
<div class="t" style="left:8px;top:529px;width:81px;height:26px;line-height:26px;color:#ffffff;">韩K联</div>
<div class="t" style="left:89px;top:529px;width:75px;height:26px;line-height:26px;color:#151515;">25-05-31</div>
<div class="t" style="left:164px;top:529px;width:125px;height:26px;line-height:26px;color:#151515;"><span style="color:#151515">全北现代</span></div>
<div class="t" style="left:289px;top:529px;width:88px;height:26px;line-height:26px;color:#151515;"><span style="color:#c4101a">3-1</span>(1-1)</div>
<div class="t" style="left:377px;top:529px;width:38px;height:26px;line-height:26px;color:#151515;">4-6</div>
<div class="t" style="left:415px;top:529px;width:110px;height:26px;line-height:26px;color:#151515;"><span style="color:#217a21">蔚山HD</span></div>
<div class="t" style="left:525px;top:529px;width:48px;height:26px;line-height:26px;color:#151515;">0.90</div>
<div class="t" style="left:573px;top:529px;width:83px;height:26px;line-height:26px;color:#151515;">平手</div>
<div class="t" style="left:656px;top:529px;width:51px;height:26px;line-height:26px;color:#151515;">0.99</div>
<div class="t" style="left:707px;top:529px;width:60px;height:26px;line-height:26px;color:#151515;">2.43</div>
<div class="t" style="left:767px;top:529px;width:60px;height:26px;line-height:26px;color:#151515;">3.23</div>
<div class="t" style="left:827px;top:529px;width:76px;height:26px;line-height:26px;color:#151515;">2.72</div>
<div class="t" style="left:903px;top:529px;width:37px;height:26px;line-height:26px;color:#0000c8;">负</div>
<div class="t" style="left:940px;top:529px;width:38px;height:26px;line-height:26px;color:#0000c8;">输</div>
<div class="t" style="left:978px;top:529px;width:57px;height:26px;line-height:26px;color:#e41c1c;">大</div>
<div style="position:absolute;left:8px;top:554px;width:1028px;height:26px;background:#ffffff;"></div>
<div style="position:absolute;left:525px;top:554px;width:182px;height:26px;background:#fdf9f6;"></div>
<div style="position:absolute;left:707px;top:554px;width:196px;height:26px;background:#f0f7fc;"></div>
<div style="position:absolute;left:8px;top:554px;width:81px;height:26px;background:#003cb2;"></div>
<div class="t" style="left:8px;top:555px;width:81px;height:26px;line-height:26px;color:#ffffff;">韩K联</div>
<div class="t" style="left:89px;top:555px;width:75px;height:26px;line-height:26px;color:#151515;">25-05-28</div>
<div class="t" style="left:164px;top:555px;width:125px;height:26px;line-height:26px;color:#151515;"><span style="color:#151515">光州FC</span></div>
<div class="t" style="left:289px;top:555px;width:88px;height:26px;line-height:26px;color:#151515;"><span style="color:#c4101a">1-1</span>(1-0)</div>
<div class="t" style="left:377px;top:555px;width:38px;height:26px;line-height:26px;color:#151515;">7-1</div>
<div class="t" style="left:415px;top:555px;width:110px;height:26px;line-height:26px;color:#151515;"><span style="color:#217a21">蔚山HD</span></div>
<div class="t" style="left:525px;top:555px;width:48px;height:26px;line-height:26px;color:#151515;">0.75</div>
<div class="t" style="left:573px;top:555px;width:83px;height:26px;line-height:26px;color:#151515;">受平/半</div>
<div class="t" style="left:656px;top:555px;width:51px;height:26px;line-height:26px;color:#151515;">1.16</div>
<div class="t" style="left:707px;top:555px;width:60px;height:26px;line-height:26px;color:#151515;">3.08</div>
<div class="t" style="left:767px;top:555px;width:60px;height:26px;line-height:26px;color:#151515;">3.08</div>
<div class="t" style="left:827px;top:555px;width:76px;height:26px;line-height:26px;color:#151515;">2.29</div>
<div class="t" style="left:903px;top:555px;width:37px;height:26px;line-height:26px;color:#1c8a1c;">平</div>
<div class="t" style="left:940px;top:555px;width:38px;height:26px;line-height:26px;color:#0000c8;">输</div>
<div class="t" style="left:978px;top:555px;width:57px;height:26px;line-height:26px;color:#1c8a1c;">走</div>
<div style="position:absolute;left:8px;top:580px;width:1028px;height:26px;background:#efefef;"></div>
<div style="position:absolute;left:525px;top:580px;width:182px;height:26px;background:#fdf9f6;"></div>
<div style="position:absolute;left:707px;top:580px;width:196px;height:26px;background:#f0f7fc;"></div>
<div style="position:absolute;left:8px;top:580px;width:81px;height:26px;background:#003cb2;"></div>
<div class="t" style="left:8px;top:581px;width:81px;height:26px;line-height:26px;color:#ffffff;">韩K联</div>
<div class="t" style="left:89px;top:581px;width:75px;height:26px;line-height:26px;color:#151515;">25-05-24</div>
<div class="t" style="left:164px;top:581px;width:125px;height:26px;line-height:26px;color:#151515;"><span style="color:#217a21">蔚山HD</span></div>
<div class="t" style="left:289px;top:581px;width:88px;height:26px;line-height:26px;color:#151515;"><span style="color:#c4101a">3-2</span>(0-1)</div>
<div class="t" style="left:377px;top:581px;width:38px;height:26px;line-height:26px;color:#151515;">5-4</div>
<div class="t" style="left:415px;top:581px;width:110px;height:26px;line-height:26px;color:#151515;"><span style="color:#151515">金泉尚武</span></div>
<div class="t" style="left:525px;top:581px;width:48px;height:26px;line-height:26px;color:#151515;">0.96</div>
<div class="t" style="left:573px;top:581px;width:83px;height:26px;line-height:26px;color:#151515;">平/半</div>
<div class="t" style="left:656px;top:581px;width:51px;height:26px;line-height:26px;color:#151515;">0.93</div>
<div class="t" style="left:707px;top:581px;width:60px;height:26px;line-height:26px;color:#151515;">2.15</div>
<div class="t" style="left:767px;top:581px;width:60px;height:26px;line-height:26px;color:#151515;">3.49</div>
<div class="t" style="left:827px;top:581px;width:76px;height:26px;line-height:26px;color:#151515;">3.02</div>
<div class="t" style="left:903px;top:581px;width:37px;height:26px;line-height:26px;color:#e41c1c;">胜</div>
<div class="t" style="left:940px;top:581px;width:38px;height:26px;line-height:26px;color:#e41c1c;">赢</div>
<div class="t" style="left:978px;top:581px;width:57px;height:26px;line-height:26px;color:#e41c1c;">大</div>
<div style="position:absolute;left:8px;top:606px;width:1028px;height:26px;background:#ffffff;"></div>
<div style="position:absolute;left:525px;top:606px;width:182px;height:26px;background:#fdf9f6;"></div>
<div style="position:absolute;left:707px;top:606px;width:196px;height:26px;background:#f0f7fc;"></div>
<div style="position:absolute;left:8px;top:606px;width:81px;height:26px;background:#003cb2;"></div>
<div class="t" style="left:8px;top:607px;width:81px;height:26px;line-height:26px;color:#ffffff;">韩K联</div>
<div class="t" style="left:89px;top:607px;width:75px;height:26px;line-height:26px;color:#151515;">25-05-17</div>
<div class="t" style="left:164px;top:607px;width:125px;height:26px;line-height:26px;color:#151515;"><span style="color:#151515">江原FC</span></div>
<div class="t" style="left:289px;top:607px;width:88px;height:26px;line-height:26px;color:#151515;"><span style="color:#c4101a">1-1</span>(0-0)</div>
<div class="t" style="left:377px;top:607px;width:38px;height:26px;line-height:26px;color:#151515;">2-8</div>
<div class="t" style="left:415px;top:607px;width:110px;height:26px;line-height:26px;color:#151515;"><span style="color:#217a21">蔚山HD</span></div>
<div class="t" style="left:525px;top:607px;width:48px;height:26px;line-height:26px;color:#151515;">0.90</div>
<div class="t" style="left:573px;top:607px;width:83px;height:26px;line-height:26px;color:#151515;">受半/一</div>
<div class="t" style="left:656px;top:607px;width:51px;height:26px;line-height:26px;color:#151515;">0.99</div>
<div class="t" style="left:707px;top:607px;width:60px;height:26px;line-height:26px;color:#151515;">4.46</div>
<div class="t" style="left:767px;top:607px;width:60px;height:26px;line-height:26px;color:#151515;">3.47</div>
<div class="t" style="left:827px;top:607px;width:76px;height:26px;line-height:26px;color:#151515;">1.75</div>
<div class="t" style="left:903px;top:607px;width:37px;height:26px;line-height:26px;color:#1c8a1c;">平</div>
<div class="t" style="left:940px;top:607px;width:38px;height:26px;line-height:26px;color:#0000c8;">输</div>
<div class="t" style="left:978px;top:607px;width:57px;height:26px;line-height:26px;color:#0000c8;">小</div>
<div style="position:absolute;left:8px;top:632px;width:1028px;height:26px;background:#efefef;"></div>
<div style="position:absolute;left:525px;top:632px;width:182px;height:26px;background:#fdf9f6;"></div>
<div style="position:absolute;left:707px;top:632px;width:196px;height:26px;background:#f0f7fc;"></div>
<div style="position:absolute;left:8px;top:632px;width:81px;height:26px;background:#3300cc;"></div>
<div class="t" style="left:8px;top:633px;width:81px;height:26px;line-height:26px;color:#ffffff;">韩国杯</div>
<div class="t" style="left:89px;top:633px;width:75px;height:26px;line-height:26px;color:#151515;">25-05-14</div>
<div class="t" style="left:164px;top:633px;width:125px;height:26px;line-height:26px;color:#151515;"><span style="color:#217a21">蔚山HD</span></div>
<div class="t" style="left:289px;top:633px;width:88px;height:26px;line-height:26px;color:#151515;"><span style="color:#c4101a">3-0</span>(1-0)</div>
<div class="t" style="left:377px;top:633px;width:38px;height:26px;line-height:26px;color:#151515;">6-1</div>
<div class="t" style="left:415px;top:633px;width:110px;height:26px;line-height:26px;color:#151515;"><span style="color:#151515">仁川联队</span></div>
<div class="t" style="left:525px;top:633px;width:48px;height:26px;line-height:26px;color:#151515;">0.80</div>
<div class="t" style="left:573px;top:633px;width:83px;height:26px;line-height:26px;color:#151515;">一球</div>
<div class="t" style="left:656px;top:633px;width:51px;height:26px;line-height:26px;color:#151515;">1.02</div>
<div class="t" style="left:707px;top:633px;width:60px;height:26px;line-height:26px;color:#151515;">1.49</div>
<div class="t" style="left:767px;top:633px;width:60px;height:26px;line-height:26px;color:#151515;">3.94</div>
<div class="t" style="left:827px;top:633px;width:76px;height:26px;line-height:26px;color:#151515;">6.07</div>
<div class="t" style="left:903px;top:633px;width:37px;height:26px;line-height:26px;color:#e41c1c;">胜</div>
<div class="t" style="left:940px;top:633px;width:38px;height:26px;line-height:26px;color:#e41c1c;">赢</div>
<div class="t" style="left:978px;top:633px;width:57px;height:26px;line-height:26px;color:#e41c1c;">大</div>
<div style="position:absolute;left:8px;top:658px;width:1028px;height:26px;background:#ffffff;"></div>
<div style="position:absolute;left:525px;top:658px;width:182px;height:26px;background:#fdf9f6;"></div>
<div style="position:absolute;left:707px;top:658px;width:196px;height:26px;background:#f0f7fc;"></div>
<div style="position:absolute;left:8px;top:658px;width:81px;height:26px;background:#003cb2;"></div>
<div class="t" style="left:8px;top:659px;width:81px;height:26px;line-height:26px;color:#ffffff;">韩K联</div>
<div class="t" style="left:89px;top:659px;width:75px;height:26px;line-height:26px;color:#151515;">25-05-11</div>
<div class="t" style="left:164px;top:659px;width:125px;height:26px;line-height:26px;color:#151515;"><span style="color:#151515">济州SK</span></div>
<div class="t" style="left:289px;top:659px;width:88px;height:26px;line-height:26px;color:#151515;"><span style="color:#c4101a">1-2</span>(0-1)</div>
<div class="t" style="left:377px;top:659px;width:38px;height:26px;line-height:26px;color:#151515;">2-12</div>
<div class="t" style="left:415px;top:659px;width:110px;height:26px;line-height:26px;color:#151515;"><span style="color:#217a21">蔚山HD</span><span class="bd">1</span></div>
<div class="t" style="left:525px;top:659px;width:48px;height:26px;line-height:26px;color:#151515;">0.87</div>
<div class="t" style="left:573px;top:659px;width:83px;height:26px;line-height:26px;color:#151515;">受半球</div>
<div class="t" style="left:656px;top:659px;width:51px;height:26px;line-height:26px;color:#151515;">1.02</div>
<div class="t" style="left:707px;top:659px;width:60px;height:26px;line-height:26px;color:#151515;">3.58</div>
<div class="t" style="left:767px;top:659px;width:60px;height:26px;line-height:26px;color:#151515;">3.29</div>
<div class="t" style="left:827px;top:659px;width:76px;height:26px;line-height:26px;color:#151515;">1.99</div>
<div class="t" style="left:903px;top:659px;width:37px;height:26px;line-height:26px;color:#e41c1c;">胜</div>
<div class="t" style="left:940px;top:659px;width:38px;height:26px;line-height:26px;color:#e41c1c;">赢</div>
<div class="t" style="left:978px;top:659px;width:57px;height:26px;line-height:26px;color:#e41c1c;">大</div>
<div style="position:absolute;left:8px;top:684px;width:1028px;height:26px;background:#efefef;"></div>
<div style="position:absolute;left:525px;top:684px;width:182px;height:26px;background:#fdf9f6;"></div>
<div style="position:absolute;left:707px;top:684px;width:196px;height:26px;background:#f0f7fc;"></div>
<div style="position:absolute;left:8px;top:684px;width:81px;height:26px;background:#003cb2;"></div>
<div class="t" style="left:8px;top:685px;width:81px;height:26px;line-height:26px;color:#ffffff;">韩K联</div>
<div class="t" style="left:89px;top:685px;width:75px;height:26px;line-height:26px;color:#151515;">25-05-05</div>
<div class="t" style="left:164px;top:685px;width:125px;height:26px;line-height:26px;color:#151515;"><span style="color:#217a21">蔚山HD</span></div>
<div class="t" style="left:289px;top:685px;width:88px;height:26px;line-height:26px;color:#151515;"><span style="color:#c4101a">1-1</span>(1-1)</div>
<div class="t" style="left:377px;top:685px;width:38px;height:26px;line-height:26px;color:#151515;">6-7</div>
<div class="t" style="left:415px;top:685px;width:110px;height:26px;line-height:26px;color:#151515;"><span style="color:#151515">浦项制铁</span></div>
<div class="t" style="left:525px;top:685px;width:48px;height:26px;line-height:26px;color:#151515;">1.08</div>
<div class="t" style="left:573px;top:685px;width:83px;height:26px;line-height:26px;color:#151515;">半/一</div>
<div class="t" style="left:656px;top:685px;width:51px;height:26px;line-height:26px;color:#151515;">0.81</div>
<div class="t" style="left:707px;top:685px;width:60px;height:26px;line-height:26px;color:#151515;">1.73</div>
<div class="t" style="left:767px;top:685px;width:60px;height:26px;line-height:26px;color:#151515;">3.57</div>
<div class="t" style="left:827px;top:685px;width:76px;height:26px;line-height:26px;color:#151515;">4.39</div>
<div class="t" style="left:903px;top:685px;width:37px;height:26px;line-height:26px;color:#1c8a1c;">平</div>
<div class="t" style="left:940px;top:685px;width:38px;height:26px;line-height:26px;color:#0000c8;">输</div>
<div class="t" style="left:978px;top:685px;width:57px;height:26px;line-height:26px;color:#0000c8;">小</div>
<div style="position:absolute;left:8px;top:710px;width:1028px;height:26px;background:#ffffff;"></div>
<div class="t" style="left:8px;top:711px;width:1028px;height:26px;line-height:26px;color:#151515;letter-spacing:0.22px">近<span style="color:#c4101a">10</span>场,胜3平3负4, 胜率:<span style="color:#c4101a">30%</span> 让胜率:<span style="color:#c4101a">40%</span> 大率:<span style="color:#c4101a">50%</span> 单率:<span style="color:#c4101a">50%</span></div>
<div style="position:absolute;left:8px;top:411px;width:1028px;height:1px;background:#c4c4c4;"></div>
<div style="position:absolute;left:525px;top:431px;width:511px;height:1px;background:#c4c4c4;"></div>
<div style="position:absolute;left:8px;top:450px;width:1028px;height:1px;background:#c4c4c4;"></div>
<div style="position:absolute;left:8px;top:476px;width:1028px;height:1px;background:#c4c4c4;"></div>
<div style="position:absolute;left:9px;top:476px;width:80px;height:1px;background:#c0c8f0;"></div>
<div style="position:absolute;left:8px;top:502px;width:1028px;height:1px;background:#c4c4c4;"></div>
<div style="position:absolute;left:9px;top:502px;width:80px;height:1px;background:#c0c8f0;"></div>
<div style="position:absolute;left:8px;top:528px;width:1028px;height:1px;background:#c4c4c4;"></div>
<div style="position:absolute;left:9px;top:528px;width:80px;height:1px;background:#c0c8f0;"></div>
<div style="position:absolute;left:8px;top:554px;width:1028px;height:1px;background:#c4c4c4;"></div>
<div style="position:absolute;left:9px;top:554px;width:80px;height:1px;background:#c0c8f0;"></div>
<div style="position:absolute;left:8px;top:580px;width:1028px;height:1px;background:#c4c4c4;"></div>
<div style="position:absolute;left:9px;top:580px;width:80px;height:1px;background:#c0c8f0;"></div>
<div style="position:absolute;left:8px;top:606px;width:1028px;height:1px;background:#c4c4c4;"></div>
<div style="position:absolute;left:9px;top:606px;width:80px;height:1px;background:#c0c8f0;"></div>
<div style="position:absolute;left:8px;top:632px;width:1028px;height:1px;background:#c4c4c4;"></div>
<div style="position:absolute;left:9px;top:632px;width:80px;height:1px;background:#c0c8f0;"></div>
<div style="position:absolute;left:8px;top:658px;width:1028px;height:1px;background:#c4c4c4;"></div>
<div style="position:absolute;left:9px;top:658px;width:80px;height:1px;background:#c0c8f0;"></div>
<div style="position:absolute;left:8px;top:684px;width:1028px;height:1px;background:#c4c4c4;"></div>
<div style="position:absolute;left:9px;top:684px;width:80px;height:1px;background:#c0c8f0;"></div>
<div style="position:absolute;left:8px;top:710px;width:1028px;height:1px;background:#c4c4c4;"></div>
<div style="position:absolute;left:8px;top:736px;width:1028px;height:1px;background:#c4c4c4;"></div>
<div style="position:absolute;left:8px;top:411px;width:1px;height:326px;background:#c4c4c4;"></div>
<div style="position:absolute;left:89px;top:411px;width:1px;height:299px;background:#c4c4c4;"></div>
<div style="position:absolute;left:164px;top:411px;width:1px;height:299px;background:#c4c4c4;"></div>
<div style="position:absolute;left:289px;top:411px;width:1px;height:299px;background:#c4c4c4;"></div>
<div style="position:absolute;left:377px;top:411px;width:1px;height:299px;background:#c4c4c4;"></div>
<div style="position:absolute;left:415px;top:411px;width:1px;height:299px;background:#c4c4c4;"></div>
<div style="position:absolute;left:525px;top:411px;width:1px;height:299px;background:#c4c4c4;"></div>
<div style="position:absolute;left:573px;top:431px;width:1px;height:279px;background:#c4c4c4;"></div>
<div style="position:absolute;left:656px;top:431px;width:1px;height:279px;background:#c4c4c4;"></div>
<div style="position:absolute;left:707px;top:411px;width:1px;height:299px;background:#c4c4c4;"></div>
<div style="position:absolute;left:767px;top:431px;width:1px;height:279px;background:#c4c4c4;"></div>
<div style="position:absolute;left:827px;top:431px;width:1px;height:279px;background:#c4c4c4;"></div>
<div style="position:absolute;left:903px;top:411px;width:1px;height:299px;background:#c4c4c4;"></div>
<div style="position:absolute;left:940px;top:431px;width:1px;height:279px;background:#c4c4c4;"></div>
<div style="position:absolute;left:978px;top:431px;width:1px;height:279px;background:#c4c4c4;"></div>
<div style="position:absolute;left:1035px;top:411px;width:1px;height:326px;background:#c4c4c4;"></div>
<div class="t" style="left:8px;top:413px;width:81px;height:38px;line-height:38px;color:#151515;">类型</div>
<div class="t" style="left:89px;top:413px;width:75px;height:38px;line-height:38px;color:#151515;">日期</div>
<div class="t" style="left:164px;top:413px;width:125px;height:38px;line-height:38px;color:#151515;">主场</div>
<div class="t" style="left:289px;top:413px;width:88px;height:38px;line-height:38px;color:#151515;">比分(半场)</div>
<div class="t" style="left:377px;top:413px;width:38px;height:38px;line-height:38px;color:#151515;">角球</div>
<div class="t" style="left:415px;top:413px;width:110px;height:38px;line-height:38px;color:#151515;">客场</div>
<div class="t" style="left:525px;top:433px;width:48px;height:18px;line-height:18px;color:#151515;">主</div>
<div class="t" style="left:573px;top:433px;width:83px;height:18px;line-height:18px;color:#151515;">让球</div>
<div class="t" style="left:656px;top:433px;width:51px;height:18px;line-height:18px;color:#151515;">客</div>
<div class="t" style="left:707px;top:433px;width:60px;height:18px;line-height:18px;color:#151515;">主</div>
<div class="t" style="left:767px;top:433px;width:60px;height:18px;line-height:18px;color:#151515;">和</div>
<div class="t" style="left:827px;top:433px;width:76px;height:18px;line-height:18px;color:#151515;">客</div>
<div class="t" style="left:903px;top:433px;width:37px;height:18px;line-height:18px;color:#151515;">胜负</div>
<div class="t" style="left:940px;top:433px;width:38px;height:18px;line-height:18px;color:#151515;">让球</div>
<div class="t" style="left:978px;top:433px;width:57px;height:18px;line-height:18px;color:#151515;">进球数</div>
<div class="sel" style="left:556px;top:412px;width:61px;height:19px;font-size:13px;line-height:17px"><span class="sl" style="left:5px;top:-1px">Crow*</span><svg class="chev" width="11" height="7" viewBox="0 0 11 7"><path d="M1.4 1.3 L5.5 5.3 L9.6 1.3" fill="none" stroke="#111" stroke-width="2"/></svg></div>
<div class="sel" style="left:625px;top:412px;width:51px;height:19px;font-size:13px;line-height:17px"><span class="sl" style="left:4px;top:-1px">终指</span><svg class="chev" width="11" height="7" viewBox="0 0 11 7"><path d="M1.4 1.3 L5.5 5.3 L9.6 1.3" fill="none" stroke="#111" stroke-width="2"/></svg></div>
<div class="sel" style="left:741px;top:412px;width:70px;height:19px;font-size:13px;line-height:17px"><span class="sl" style="left:4px;top:-1px">平均值</span><svg class="chev" width="11" height="7" viewBox="0 0 11 7"><path d="M1.4 1.3 L5.5 5.3 L9.6 1.3" fill="none" stroke="#111" stroke-width="2"/></svg></div>
<div class="sel" style="left:818px;top:412px;width:51px;height:19px;font-size:13px;line-height:17px"><span class="sl" style="left:4px;top:-1px">终指</span><svg class="chev" width="11" height="7" viewBox="0 0 11 7"><path d="M1.4 1.3 L5.5 5.3 L9.6 1.3" fill="none" stroke="#111" stroke-width="2"/></svg></div>
<div class="sel" style="left:944px;top:412px;width:51px;height:19px;font-size:13px;line-height:17px"><span class="sl" style="left:4px;top:-1px">全场</span><svg class="chev" width="11" height="7" viewBox="0 0 11 7"><path d="M1.4 1.3 L5.5 5.3 L9.6 1.3" fill="none" stroke="#111" stroke-width="2"/></svg></div></body></html>
